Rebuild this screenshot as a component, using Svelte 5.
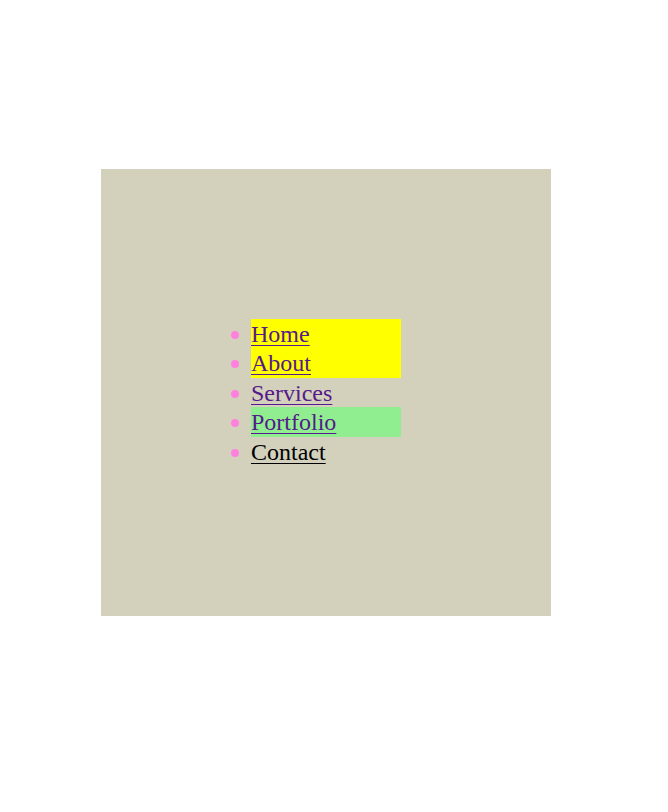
<script>
  const items = [
    { label: 'Home', kind: 'highlight' },
    { label: 'About', kind: 'highlight' },
    { label: 'Services', kind: '' },
    { label: 'Portfolio', kind: 'fresh' },
    { label: 'Contact', kind: 'plain' }
  ];
</script>

<main>
  <nav aria-label="Main">
    <ul>
      {#each items as item}
        <li class={item.kind}><a href="#{item.label.toLowerCase()}">{item.label}</a></li>
      {/each}
    </ul>
  </nav>
</main>

<style>
  :global(body) {
    margin: 0;
    background: #fff;
  }
  main {
    padding: 169px 117px 196px 101px;
  }
  nav {
    padding: 150px;
    background: #d3d0bc;
  }
  ul {
    display: grid;
    grid-auto-rows: 1fr;
    min-height: 147px;
    margin: 0;
    padding: 0;
    list-style: none;
    font: 24px 'Liberation Serif', 'Times New Roman', serif;
  }
  li {
    padding-top: 1px;
    line-height: 28px;
  }
  li::before {
    content: '';
    display: inline-block;
    width: 8px;
    height: 8px;
    margin-left: -20px;
    margin-right: 12px;
    border-radius: 50%;
    background: #ff80df;
    vertical-align: 3px;
  }
  a {
    color: #551a8b;
    text-decoration-thickness: 1px;
    text-underline-offset: 3px;
  }
  .highlight {
    background: #ffff00;
  }
  .fresh {
    background: #90ee90;
  }
  .plain a {
    color: #000;
  }
</style>
